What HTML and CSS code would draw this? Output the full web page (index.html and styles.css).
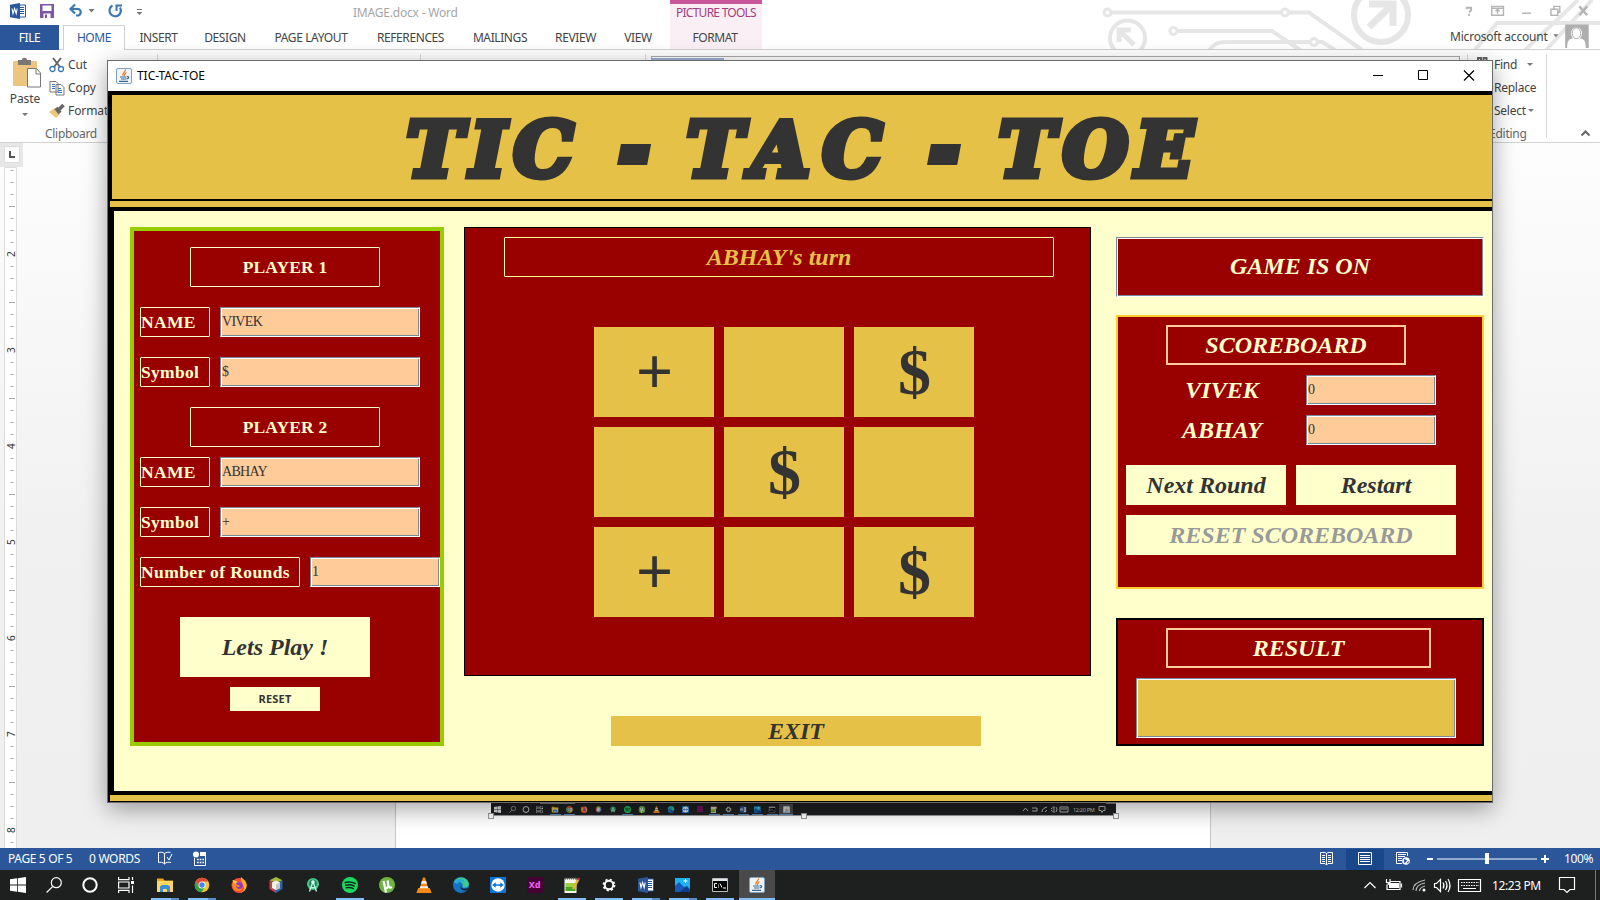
FILE: index.html
```html
<!DOCTYPE html>
<html lang="en">
<head>
<meta charset="utf-8">
<title>TIC-TAC-TOE</title>
<link rel="stylesheet" href="styles.css">
</head>
<body>
<svg width="0" height="0" class="defs">
  <symbol id="i-start" viewBox="0 0 16 16"><path fill="#fff" d="M0 2.3 7 1.3V7.6H0zM7.8 1.2 16 0V7.6H7.8zM0 8.4H7V14.7L0 13.7zM7.8 8.4H16V16L7.8 14.8z"/></symbol>
  <symbol id="i-search" viewBox="0 0 16 16"><g fill="none" stroke="#fff" stroke-width="1.2"><circle cx="10.3" cy="5.7" r="5"/><path d="M6.8 9.3.6 15.5"/></g></symbol>
  <symbol id="i-cortana" viewBox="0 0 16 16"><circle cx="8" cy="8" r="6.7" fill="none" stroke="#fff" stroke-width="2"/></symbol>
  <symbol id="i-task" viewBox="0 0 16 16"><g fill="none" stroke="#fff" stroke-width="1.2"><path d="M.6 0V2.600H11V0M.6 16V13.400H11V16M.6 5H11V11H.6zM14.500 0V3M14.500 8.500V16"/></g><path fill="#fff" d="M13 4h3v3h-3z"/></symbol>
  <symbol id="i-explorer" viewBox="0 0 16 16"><path fill="#e8a91c" d="M0 1.500h6l1.500 2H16V6H0z"/><path fill="#ffd767" d="M0 4h16v11H0z"/><path fill="#3d8fd6" d="M3 15V9.500L5 8h6l2 1.500V15h-3v-3H6v3z"/></symbol>
  <symbol id="i-chrome" viewBox="0 0 16 16"><circle cx="8" cy="8" r="7.300" fill="#f7c52d"/><path fill="#e0473a" d="M8 .7A7.300 7.300 0 0 0 1.700 4.300L4.800 9.500 8 4.500h6.400A7.300 7.300 0 0 0 8 .7z"/><path fill="#2da14c" d="M1.700 4.300A7.300 7.300 0 0 0 7.500 15.300L11 10 5 10.200z"/><circle cx="8" cy="8" r="3.500" fill="#fff"/><circle cx="8" cy="8" r="2.700" fill="#4284f0"/></symbol>
  <symbol id="i-firefox" viewBox="0 0 16 16"><circle cx="8" cy="8.500" r="7.500" fill="#ff4a3d"/><path fill="#ffb31f" d="M10 0c2 2 5.700 4 5.700 8.500S11.500 16 8 16c4-1 6-4 4.500-7C12 6 9 4 10 0z"/><path fill="#ffcb35" d="M1.500 3C3 3 4 4 5 4L9 6.500 5 7 3 9z"/><circle cx="8" cy="8.500" r="3.600" fill="#8c38c8"/><path fill="#ff8a21" d="M1 7c2-1 4-.5 6 1l2 1c-1 1.500-3 1-4 0 0 3 4 4 6 2-1 4-7 4-9 0z"/></symbol>
  <symbol id="i-cube" viewBox="0 0 16 16"><path fill="#a5ba3d" d="m8 0 6.500 3.200L8 6 1.500 3.200z"/><path fill="#b84451" d="M1.500 3.200 8 6v10l-6.500-4z"/><path fill="#2a66a5" d="M14.500 3.200 8 6v10l6.500-4z"/><path fill="#f4f0e5" d="m8 3.500 4 2V11l-4 2-4-2V5.500z"/><path fill="#c5c5c5" d="m8 7.500 4-2V11l-4 2z"/></symbol>
  <symbol id="i-android" viewBox="0 0 16 16"><circle cx="8" cy="7" r="6" fill="#40c987"/><circle cx="8" cy="6.500" r="3.800" fill="#1f7d62"/><path d="m4.500 14.500 3-8.500M11.500 14.500 8.500 6M5.500 10q2.500 1.500 5 0" stroke="#bff0da" stroke-width="1.400" fill="none"/><circle cx="8" cy="5" r="1.800" fill="#e5fff3"/></symbol>
  <symbol id="i-spotify" viewBox="0 0 16 16"><circle cx="8" cy="8" r="8" fill="#1ed760"/><path d="M3.200 5.500c3.500-1 7-.6 10 1M3.700 8.200c3-.8 6-.5 8.500.9M4.300 10.800c2.500-.6 5-.3 7 .8" stroke="#102a18" stroke-width="1.500" fill="none" stroke-linecap="round"/></symbol>
  <symbol id="i-ut" viewBox="0 0 16 16"><circle cx="8" cy="8" r="8" fill="#6fb544"/><path d="M4.500 4 6 10.500c1.500 1 3.500.5 3.300-2L8.700 3.500M9.300 8.500c.5 2.500 2 2.500 3.500 1.500M6 10.500 7 15.500" stroke="#fff" stroke-width="2.200" fill="none"/></symbol>
  <symbol id="i-vlc" viewBox="0 0 16 16"><path fill="#f48b15" d="M2.200 11h11.600l1.800 5H.4z"/><path fill="#f58a12" d="M7 .5h2L12.500 12c-1 1.500-8 1.500-9 0z"/><path fill="#eee" d="m5.900 4 4.200 0 .9 2.800H5zM4.300 9.300h7.400l.6 2H3.700z"/></symbol>
  <symbol id="i-edge" viewBox="0 0 16 16"><circle cx="8" cy="8" r="8" fill="#1673ca"/><path fill="#3ccb8b" d="M1 5C3 0 10-1 14 3c3 3 2 7-1 7.500H9.500c1-2 .5-5-3-5.500C4 4.500 2 5 1 6z"/><path fill="#26aadb" d="M1 5c3-4 9-4 11 0-3-1-6-.5-8 2z"/><path fill="#1c1c1c" d="M8 8c-1 3 3 5 7 3l-.6 1.500C11 15 6 12 8 8z"/></symbol>
  <symbol id="i-tv" viewBox="0 0 16 16"><path fill="#0d72d8" d="M0 0h16v16H0z"/><circle cx="8" cy="8" r="6.700" fill="#fff"/><path fill="#0d72d8" d="m2.200 8 3.500-2.800v2h4.600v-2L13.800 8l-3.500 2.800v-2H5.700v2z"/></symbol>
  <symbol id="i-npp" viewBox="0 0 16 16"><path fill="#f5f5e9" d="M.5 1.500h12V16H.5z"/><path fill="#9bd043" d="M1.500 6h10v5h-10z"/><path fill="#46a51f" d="M1.500 10h10v4h-10z"/><path d="M1 1.500h11" stroke="#555" stroke-width="2" stroke-dasharray="1 1"/><path d="m9 12 5.500-10" stroke="#e7b32d" stroke-width="2.500"/><path d="m14 3 1-2" stroke="#c52d2d" stroke-width="2.500"/></symbol>
  <symbol id="i-gear" viewBox="0 0 16 16"><circle cx="8" cy="8" r="4.200" fill="none" stroke="#fff" stroke-width="1.900"/><circle cx="8" cy="8" r="5.600" fill="none" stroke="#fff" stroke-width="1.600" stroke-dasharray="2.200 2.200"/></symbol>
  <symbol id="i-word" viewBox="0 0 16 16"><path fill="#fff" stroke="#2b579a" d="M8 2h7.500v12H8z"/><path d="M9.500 4.500H14M9.500 6.500H14M9.500 8.500H14M9.500 10.500H14" stroke="#2b579a"/><path fill="#2b579a" d="m0 1.800 10-1.800v16L0 14.200z"/><path d="m2 5.500 1 5 1.600-5 1.600 5 1-5" fill="none" stroke="#fff" stroke-width="1.100"/></symbol>
  <symbol id="i-photos" viewBox="0 0 16 16"><path fill="#1bb3f2" d="M0 1h15v14H0z"/><path fill="#175ab8" d="m0 9 4-4 6 6 2-2 3 3v3H0z"/><path fill="#0c3f8e" d="m5 15 6-6 4 4v2z"/><path d="M10.500 2v4M8.500 4h4" stroke="#fff"/></symbol>
  <symbol id="i-cmd" viewBox="0 0 16 16"><path fill="#000" stroke="#bbb" d="M.5 1.500h15v13H.5z"/><path fill="#dde5ee" d="M1 2h14v2H1z"/><path d="M5 6.500H2.500v4H5M6.500 7.500v1M6.500 9.500v1M8 6.500l2 4M11 11h3" fill="none" stroke="#fff"/></symbol>
  <symbol id="i-java" viewBox="0 0 16 16"><rect x=".5" y=".5" width="15" height="15" rx="1.500" fill="#f1f4f7" stroke="#7fa0b8"/><path d="M9.500 1.500C10 4 6 4.500 7 7.500M10.500 4.500C8 5.500 9.500 6.500 8 8" fill="none" stroke="#e8781f" stroke-width="1.300"/><path d="M4 9h6.500M5 11h5M3 13.300h9M11 8.700c2.500-.4 2 2-.5 2.300" fill="none" stroke="#38688f" stroke-width="1.200"/></symbol>
</svg>

<div class="word">
  <header class="word-top">
    <svg class="deco" viewBox="1100 0 500 49" width="500" height="49">
      <g fill="none" stroke="#e6e6e6" stroke-width="4">
        <path d="M1111 12.500H1281M1289 12.500H1309L1362 50M1177 31H1272L1300 50M1209 50C1215 43 1219 42 1226 42H1310M1318 42H1322L1335 50"/>
        <path d="M1475 50 1497 23H1600M1525 50 1578 0M1546 50 1592 0"/>
        <circle cx="1107.500" cy="12.500" r="3.500" stroke-width="3"/><circle cx="1285" cy="12.500" r="3.500" stroke-width="3"/><circle cx="1173.500" cy="31" r="3.500" stroke-width="3"/><circle cx="1314" cy="42" r="3.500" stroke-width="3"/>
        <circle cx="1127.500" cy="38" r="17.500"/><path d="M1119 42V30H1131M1120 31 1134 45" stroke-width="5"/>
        <circle cx="1381" cy="15" r="27" stroke-width="6"/><path d="M1369 4H1393V26M1392 5 1369 27" stroke-width="7"/>
      </g>
    </svg>
    <div class="qat">
      <svg width="160" height="25" viewBox="0 0 160 25">
        <use href="#i-word" x="10" y="3" width="16" height="16"/>
        <path fill="#8055a8" d="M40 4h14v14H40z"/><path fill="#fff" d="M42.500 5.500h9V11h-9zM43.500 13.500h7V18h-7z"/><path fill="#8055a8" d="M45 14.500h2V18h-2z"/>
        <path d="M71 9H78.500A3.500 3.500 0 0 1 78.500 15.500H76M75 4.500 70.500 9 75 13.500" fill="none" stroke="#3b76b5" stroke-width="2.200"/><path fill="#777" d="M88.500 9h6l-3 3.500z"/>
        <path d="M112.500 5.500A5.700 5.700 0 1 0 120 7.500" fill="none" stroke="#3b76b5" stroke-width="2.200"/><path d="M122 5.500H116.500V11" fill="none" stroke="#3b76b5" stroke-width="2"/>
        <path d="M137 9.500h5" stroke="#777"/><path fill="#777" d="M136.500 12h6l-3 3z"/>
      </svg>
    </div>
    <div class="doc-name">IMAGE.docx - Word</div>
    <div class="tools-head">PICTURE TOOLS</div>
    <nav class="tabs">
      <span class="t-file">FILE</span><span class="t-home">HOME</span><span class="t-ins">INSERT</span><span class="t-des">DESIGN</span><span class="t-lay">PAGE LAYOUT</span><span class="t-ref">REFERENCES</span><span class="t-mail">MAILINGS</span><span class="t-rev">REVIEW</span><span class="t-view">VIEW</span><span class="t-fmt">FORMAT</span>
      <span class="acct">Microsoft account</span>
    </nav>
    <svg class="win-ctl" width="150" height="50" viewBox="1450 0 150 50">
      <g fill="none" stroke="#b5b5b5" stroke-width="1.500"><path stroke-width="2" d="M1465.500 9.500V8H1470V10.500L1468 12.500M1468 14v2"/><path d="M1491 6.500h12v9h-12zM1491 8.500h12M1497 14v-4M1495 11.500l2-2 2 2M1522 13.500h9M1554.500 9V6.500h6v6h-2M1551.500 9.500h7v6h-7z"/><path stroke-width="2.500" d="m1580.500 6.500 8 9m0-9-8 9"/></g>
      <path fill="#777" d="M1554 35h5l-2.500 3z"/>
      <path fill="#aeaeae" d="M1566 25h24v24h-24z"/><path fill="#fff" d="M1568 49c0-8 2-9 6-10-3-3-3-11 3.500-11s7 8 3.500 11c4 1 6 2 6 10z"/><ellipse cx="1577.500" cy="34" rx="4.300" ry="5.500" fill="#fff" stroke="#aeaeae"/>
    </svg>
  </header>

  <section class="ribbon">
    <div class="paste">
      <svg width="30" height="32" viewBox="0 0 30 32"><rect x="1" y="4" width="24" height="25" rx="1" fill="#ecc67f"/><path fill="#777" d="M6 3h4c0-3 5-3 5 0h4v5H6z"/><path fill="#fff" stroke="#777" d="M15.500 11.500h9l4 4.500v14h-13z"/><path d="M24 12v5h5" fill="none" stroke="#777"/></svg>
      <span>Paste</span><i class="caret"></i>
    </div>
    <div class="clip">
      <div><svg width="16" height="16"><path d="M4 1 11 10M12 1 5 10" stroke="#666" stroke-width="2"/><circle cx="3.500" cy="12" r="2.500" fill="none" stroke="#3b76b5" stroke-width="1.300"/><circle cx="12" cy="12" r="2.500" fill="none" stroke="#3b76b5" stroke-width="1.300"/></svg>Cut</div>
      <div><svg width="16" height="16"><path fill="#fff" stroke="#777" d="M1 1.500h6l2 2V12H1zM7 4.500h5l3 3V15H7z"/><path d="M3 4.500h3M3 6.500h3M3 8.500h3M9 8.500h3M9 10.500h4M9 12.500h4" stroke="#3b76b5"/></svg>Copy</div>
      <div><svg width="16" height="16"><path fill="#ecc67f" d="m0 9 6-4 5 6-4 4z"/><path stroke="#666" stroke-width="4" d="m7 5 4 5"/><path stroke="#666" stroke-width="3.500" d="m9.500 7 5-5"/></svg>Format</div>
    </div>
    <div class="group-name g1">Clipboard</div>
    <i class="sep s1"></i><i class="sep s2"></i><i class="sep s3"></i><i class="sep s4"></i><i class="sep s5"></i>
    <div class="gallery"><i></i></div>
    <svg class="binoc" width="12" height="8"><path d="M2 7V3h3v4M7.500 7V3h3v4" fill="none" stroke="#666" stroke-width="2"/></svg>
    <div class="edit"><div>Find<i class="caret far"></i></div><div>Replace</div><div>Select<i class="caret"></i></div></div>
    <div class="group-name g2">Editing</div>
    <svg class="collapse" width="12" height="8"><path d="m1.500 6.500 4-4 4 4" fill="none" stroke="#666" stroke-width="2"/></svg>
  </section>

  <main class="doc">
    <svg class="ruler" width="23" height="705" viewBox="0 143 23 705">
      <path fill="#e7e7e7" d="M0 143h23v24H0z"/>
      <path fill="#fff" stroke="#ddd" d="M4.500 146.500h15v16h-15zM4.500 167.500h12V860h-12z"/>
      <path d="M10 151v6h5" fill="none" stroke="#555" stroke-width="2"/>
      <path d="M12 170V848" stroke="#aaa" stroke-width="3" stroke-dasharray="1 11"/>
      <path d="M12 206V848" stroke="#aaa" stroke-width="6" stroke-dasharray="1 95"/>
      <path fill="#fff" d="M6 248h10v12H6zM6 344h10v12H6zM6 440h10v12H6zM6 536h10v12H6zM6 632h10v12H6zM6 728h10v12H6zM6 824h10v12H6z"/>
      <g class="rnum">
        <text transform="translate(15 257) rotate(-90)">2</text><text transform="translate(15 353) rotate(-90)">3</text><text transform="translate(15 449) rotate(-90)">4</text><text transform="translate(15 545) rotate(-90)">5</text><text transform="translate(15 641) rotate(-90)">6</text><text transform="translate(15 737) rotate(-90)">7</text><text transform="translate(15 833) rotate(-90)">8</text>
      </g>
    </svg>
    <div class="page">
      <svg width="640" height="30" viewBox="484 796 640 30">
        <path fill="#1d1f20" d="M491 796h625v19H491z"/><path d="M491 815.500h625" stroke="#999"/><path d="M540 803.500h35M1106 803.500h10" stroke="#777"/>
        <path fill="#484848" d="M779 804h14v11h-14z"/>
        <g opacity=".85">
        <use href="#i-start" x="494" y="806" width="7" height="7"/><use href="#i-search" x="509" y="806" width="7" height="7"/><use href="#i-cortana" x="522" y="806" width="8" height="7"/><use href="#i-task" x="536" y="806" width="7" height="7"/>
        <use href="#i-explorer" x="551.500" y="806" width="7" height="7"/><use href="#i-chrome" x="566" y="806" width="7" height="7"/><use href="#i-firefox" x="580.500" y="806" width="7" height="7"/><use href="#i-cube" x="595" y="806" width="7" height="7"/><use href="#i-android" x="609.500" y="806" width="7" height="7"/><use href="#i-spotify" x="624" y="806" width="7" height="7"/><use href="#i-ut" x="638.500" y="806" width="7" height="7"/><use href="#i-vlc" x="653" y="806" width="7" height="7"/><use href="#i-edge" x="667.500" y="806" width="7" height="7"/><use href="#i-tv" x="682" y="806" width="7" height="7"/><path fill="#7d1263" d="M697 806h6v6h-6z"/><use href="#i-npp" x="710.500" y="806" width="7" height="7"/><use href="#i-gear" x="725" y="806" width="7" height="7"/><use href="#i-word" x="739.500" y="806" width="7" height="7"/><use href="#i-photos" x="754" y="806" width="7" height="7"/><use href="#i-cmd" x="768.500" y="806" width="7" height="7"/><use href="#i-java" x="783" y="806" width="7" height="7"/>
        <path d="M550 814.500h11M564 814.500h11M622 814.500h11M709 814.500h11M723 814.500h11M738 814.500h11M752 814.500h11M767 814.500h11M779 814.500h14" stroke="#5f9ad0"/>
        <path d="m1023 811 2.500-3 2.500 3M1032 808h5v3h-5M1042 812c0-3 2-4 5-5M1045 812l2-2M1051 808.500h1l2-2v6l-2-2h-1M1056 807q2 2 0 5M1060 807h8v5h-8zM1061 809h6M1099 806.500h6v4h-2l-1 2-1-2h-2z" fill="none" stroke="#ccc"/>
        <text x="1073" y="811.500" class="mini-clock">12:20 PM</text></g>
        <g fill="#fff" stroke="#999"><rect x="488.500" y="813.500" width="5" height="5"/><rect x="801.500" y="813.500" width="5" height="5"/><rect x="1113.500" y="813.500" width="5" height="5"/></g>
      </svg>
    </div>
  </main>

  <footer class="status">
    <span class="st-page">PAGE 5 OF 5</span><span class="st-words">0 WORDS</span>
    <svg class="st-proof" width="52" height="22" viewBox="156 0 52 22"><g fill="none" stroke="#fff"><path d="M164.500 16V5.500C163 4 160 4 158.500 4.500V14.500C160 14 163 14 164.500 16C166 14 169 14 171 14.500M164.500 5.500C166 4 169 4 170.500 4.500M167 9l2 3 3-6"/></g><circle cx="196" cy="6.500" r="3" fill="#fff"/><path fill="#fff" d="M200 4h6v4h-6z"/><path d="M194.500 10v7.500h11V8" fill="none" stroke="#fff"/><path d="M197 11.500h7M197 14.500h7" stroke="#fff" stroke-width="1.500" stroke-dasharray="1.700 1"/></svg>
    <svg class="st-view" width="240" height="22" viewBox="1318 0 240 22">
      <path fill="#1a478a" d="M1346 1h38v21h-38z"/>
      <g fill="none" stroke="#fff"><path d="M1320.500 4.500h4.500l1.500 1 1.500-1h4.500v11h-4.500l-1.500 1.500-1.500-1.500h-4.500zM1326.500 5v12M1322 7.500h3M1322 9.500h3M1322 11.500h3M1322 13.500h3M1328 7.500h3M1328 9.500h3M1328 11.500h3M1328 13.500h3"/><path d="M1358.500 4.500h13v12h-13zM1360 7.500h10M1360 9.500h10M1360 11.500h10M1360 13.500h10"/><path d="M1402 15.500h-5.500v-11h11V8M1398 6.500h8M1398 8.500h7M1398 10.500h4M1398 12.500h4"/></g>
      <circle cx="1406" cy="13" r="3.800" fill="#fff"/><path fill="#2b579a" d="m1404 11 3 1-1 2-2 1zM1407 14l2-1-1 3z"/>
      <path fill="#fff" d="M1427 10h6v2h-6zM1437 10.500h100v1h-100zM1485 5h4v11h-4zM1541 10h8v2h-8zM1544 7h2v8h-2z"/>
    </svg>
    <span class="st-zoom">100%</span>
  </footer>

  <footer class="taskbar">
    <span class="sys"><svg><use href="#i-start"/></svg></span><span class="sys"><svg><use href="#i-search"/></svg></span><span class="sys"><svg><use href="#i-cortana"/></svg></span><span class="sys last"><svg><use href="#i-task"/></svg></span>
    <span class="app run multi"><svg><use href="#i-explorer"/></svg></span><span class="app run multi"><svg><use href="#i-chrome"/></svg></span><span class="app"><svg><use href="#i-firefox"/></svg></span><span class="app"><svg><use href="#i-cube"/></svg></span><span class="app"><svg><use href="#i-android"/></svg></span><span class="app run"><svg><use href="#i-spotify"/></svg></span><span class="app"><svg><use href="#i-ut"/></svg></span><span class="app"><svg><use href="#i-vlc"/></svg></span><span class="app"><svg><use href="#i-edge"/></svg></span><span class="app"><svg><use href="#i-tv"/></svg></span><span class="app"><b class="xd">Xd</b></span><span class="app run"><svg><use href="#i-npp"/></svg></span><span class="app run"><svg><use href="#i-gear"/></svg></span><span class="app run multi"><svg><use href="#i-word"/></svg></span><span class="app run multi"><svg><use href="#i-photos"/></svg></span><span class="app run"><svg><use href="#i-cmd"/></svg></span><span class="app active"><svg><use href="#i-java"/></svg></span>
    <svg class="tray" width="124" height="30" viewBox="1362 0 124 30"><g fill="none" stroke="#fff" stroke-width="1.200"><path d="m1364.500 18 5.500-5.500 5.500 5.500"/><path d="M1390 11.500h10v8h-13v-5M1386.500 9v3.500h3.500V9M1388.300 13v2M1401.500 13.500v4"/><path d="M1413 20c0-5 3-8 12-10M1416 21c0-4 3-7 9-8M1419.500 21c0-3 2-4 5.500-5" stroke="#bbb"/><path d="M1434.500 13.500h2l4-4v12l-4-4h-2zM1443 12.500q2 3 0 6M1445.500 11q3 4.500 0 9M1448 9q4 6.500 0 13"/><path d="M1458.500 9.500h22v12h-22zM1463 18.500h13"/><path d="M1461 12.500h18M1461 15.500h18" stroke-dasharray="1.500 1"/></g><path fill="#fff" d="M1389 13h10v5h-10z"/><circle cx="1424" cy="20" r="1.500" fill="#fff"/></svg>
    <span class="clock">12:23 PM</span>
    <svg class="notif" width="18" height="18"><path d="M1.500 1.500h15v12h-4.500l-3 3-3-3h-4.500z" fill="none" stroke="#fff" stroke-width="1.200"/></svg>
    <i class="peek"></i>
  </footer>
</div>

<div class="window">
  <div class="titlebar">
    <svg width="16" height="16"><use href="#i-java"/></svg><span>TIC-TAC-TOE</span>
    <svg class="wbtn" width="104" height="14" viewBox="1372 74 104 14"><g fill="none" stroke="#000"><path d="M1373 81.500h10M1418.500 76.500h9v9h-9z"/><path d="m1464 76.500 10 10m0-10-10 10" stroke-width="1.200"/></g></svg>
  </div>
  <div class="banner"><span class="w1">TIC</span><span class="dash d1">-</span><span class="w3">TAC</span><span class="dash d2">-</span><span class="w5">TOE</span></div>
  <div class="stripe"></div>
  <div class="board">
    <section class="players">
      <h2>PLAYER 1</h2>
      <div class="row"><label>NAME</label><div class="field">VIVEK</div></div>
      <div class="row"><label>Symbol</label><div class="field">$</div></div>
      <h2 class="second">PLAYER 2</h2>
      <div class="row close"><label>NAME</label><div class="field">ABHAY</div></div>
      <div class="row"><label>Symbol</label><div class="field">+</div></div>
      <div class="row rounds"><label>Number of Rounds</label><div class="field">1</div></div>
      <button class="play">Lets Play !</button>
      <button class="reset">RESET</button>
    </section>
    <section class="middle">
      <div class="arena">
        <div class="turn">ABHAY's turn</div>
        <div class="cells"><b>+</b><b></b><b>$</b><b></b><b>$</b><b></b><b>+</b><b></b><b>$</b></div>
      </div>
      <button class="exit">EXIT</button>
    </section>
    <section class="side">
      <div class="game-on">GAME IS ON</div>
      <div class="scores">
        <h3>SCOREBOARD</h3>
        <div class="score"><span>VIVEK</span><div class="field">0</div></div>
        <div class="score"><span>ABHAY</span><div class="field">0</div></div>
        <div class="btns"><button>Next Round</button><button>Restart</button><button class="wide" disabled>RESET SCOREBOARD</button></div>
      </div>
      <div class="result"><h3>RESULT</h3><div class="out"></div></div>
    </section>
  </div>
  <div class="stripe bottom"></div>
</div>
</body>
</html>
```
FILE: styles.css
```css
* { box-sizing: border-box; }
body { margin: 0; width: 1600px; height: 900px; overflow: hidden; position: relative; background: #fff; font-family: "Noto Sans", "Open Sans", sans-serif; font-size: 12px; color: #444; }
svg { display: block; flex: none; }
.defs { position: absolute; }
h2, h3 { margin: 0; }
button { border: 0; padding: 0; margin: 0; border-radius: 0; }

/* Word */
.word { width: 1600px; height: 900px; display: flex; flex-direction: column; }
.word-top { height: 50px; flex: none; position: relative; border-bottom: 1px solid #d0d0d0; display: grid; grid-template: 25px 25px / 160px 1fr; }
.deco { position: absolute; left: 1100px; top: 0; }
.win-ctl { position: absolute; left: 1450px; top: 0; height: 49px; width: 150px; }
.doc-name { position: absolute; left: 353px; top: 4px; line-height: 17px; color: #a6a6a6; letter-spacing: -.2px; white-space: nowrap; }
.tools-head { position: absolute; left: 670px; top: 0; width: 92px; height: 49px; border-top: 4px solid #c9589b; background: #fbeff6; color: #a53c7c; text-align: center; line-height: 18px; letter-spacing: -.75px; white-space: nowrap; }
.tabs { grid-area: 2 / 1 / 3 / 3; display: flex; position: relative; height: 25px; line-height: 25px; text-align: center; letter-spacing: -.4px; white-space: nowrap; }
.tabs span { flex: none; }
.t-file { width: 59px; margin-right: 4px; background: #2b579a; color: #fff; }
.t-home { width: 62px; background: #fff; border: 1px solid #d0d0d0; border-bottom: 0; color: #2b579a; line-height: 23px; }
.t-ins { width: 67px; }
.t-des { width: 66px; }
.t-lay { width: 106px; }
.t-ref { width: 93px; }
.t-mail { width: 86px; }
.t-rev { width: 65px; }
.t-view { width: 60px; }
.t-fmt { width: 94px; }
.acct { margin-left: 688px; letter-spacing: -.2px; line-height: 23px; }
.ribbon { height: 93px; flex: none; position: relative; border-bottom: 1px solid #d2d2d2; display: flex; letter-spacing: -.1px; }
.paste { width: 49px; padding-top: 7px; display: flex; flex-direction: column; align-items: center; }
.paste svg { margin-left: 5px; }
.paste span { line-height: 20px; padding-left: 1px; }
.caret { display: inline-block; border: 3px solid transparent; border-top-color: #777; border-bottom: 0; vertical-align: middle; }
.paste .caret { margin-top: 4px; }
.clip { padding-top: 3px; display: flex; flex-direction: column; }
.clip div { display: flex; gap: 3px; align-items: center; height: 23px; }
.group-name { position: absolute; top: 76px; line-height: 16px; color: #666; }
.g1 { left: 45px; letter-spacing: -.3px; }
.g2 { left: 1489px; letter-spacing: -.25px; }
.sep { position: absolute; top: 4px; width: 1px; height: 84px; background: #d8d8d8; }
.s1 { left: 157px; }
.s2 { left: 420px; }
.s3 { left: 645px; }
.s4 { left: 1467px; }
.s5 { left: 1546px; }
.gallery { position: absolute; left: 651px; top: 6px; width: 809px; height: 70px; border: 1px solid #aaa; padding-top: 1px; }
.gallery i { display: block; width: 72px; height: 6px; background: #9cb0d6; }
.binoc { position: absolute; left: 1476px; top: 5px; }
.edit { position: absolute; left: 1494px; top: 3px; letter-spacing: -.25px; }
.edit div { height: 23px; line-height: 23px; white-space: nowrap; }
.edit .caret { margin: 0 0 2px 2px; }
.edit .far { margin-left: 10px; }
.collapse { position: absolute; left: 1580px; top: 79px; }
.doc { flex: 1; display: flex; background: linear-gradient(#fdfdfd, #f0f0f0 60%, #efefef); overflow: hidden; }
.rnum { font: 10px "Noto Sans", sans-serif; fill: #333; }
.page { margin-left: 372px; width: 816px; background: #fff; border: solid #c6c6c6; border-width: 0 1px; padding: 653px 0 0 88px; overflow: hidden; }
.mini-clock { font: 5.5px "Noto Sans", sans-serif; fill: #ddd; letter-spacing: -.3px; }
.status { height: 22px; flex: none; background: #2b579a; color: #fff; display: flex; line-height: 21px; letter-spacing: -.35px; white-space: nowrap; }
.status span { flex: none; }
.st-page { width: 81px; margin-left: 8px; }
.st-words { width: 67px; letter-spacing: -.3px; }
.st-view { margin-left: 1110px; }
.st-zoom { width: 36px; margin-left: 6px; }
.taskbar { height: 30px; flex: none; background: #1e1f1f; display: flex; align-items: center; }
.sys { width: 36px; display: flex; justify-content: center; }
.sys.last { margin-right: 2px; }
.taskbar span svg { width: 16px; height: 16px; }
.app { width: 37px; height: 30px; display: flex; justify-content: center; align-items: center; position: relative; flex: none; }
.xd { width: 16px; height: 16px; border-radius: 2px; background: #470137; color: #ff61f6; font-size: 9px; line-height: 15px; text-align: center; }
.run::after { content: ""; position: absolute; left: 5px; bottom: 0; width: 28px; height: 2px; background: #84bdf5; }
.multi::after { background: linear-gradient(90deg, #84bdf5 20px, #5b8fc2 20px); }
.active { background: #4a4a4a; width: 36px; margin-left: 1px; border-bottom: 2px solid #84bdf5; padding-top: 2px; }
.tray { margin-left: 587px; }
.clock { width: 66px; padding-left: 6px; color: #fff; white-space: nowrap; letter-spacing: -.4px; }
.notif { margin-left: 6px; }
.peek { margin-left: 19px; width: 1px; height: 30px; background: #777; }

/* Game window */
.window { position: absolute; left: 107px; top: 60px; width: 1386px; height: 743px; border: 1px solid #6b6b6b; background: #000; box-shadow: 0 6px 22px rgba(0,0,0,.36); font-family: "Liberation Serif", serif; color: #333; }
.titlebar { height: 30px; background: #fff; display: flex; align-items: center; padding-left: 8px; color: #000; font: 12px "Noto Sans", sans-serif; letter-spacing: -.05px; gap: 5px; }
.titlebar span { width: 120px; padding-bottom: 2px; }
.wbtn { margin-left: 1110px; margin-bottom: 2px; }
.banner { height: 108px; border: solid #000; border-width: 4px 0 0 4px; background: #e5c147; display: flex; font: italic bold 75px/111px "DejaVu Serif", serif; color: #333; -webkit-text-stroke: 7px #333; paint-order: stroke fill; padding-left: 289px; }
.banner span { flex: none; text-align: center; height: 104px; white-space: nowrap; }
.w1 { width: 186px; letter-spacing: 8px; }
.d1 { width: 94px; }
.w3 { width: 220px; letter-spacing: 13px; }
.d2 { width: 86px; }
.w5 { width: 226px; letter-spacing: 8px; }
.banner .dash { -webkit-text-stroke-width: 14px; font-size: 52px; }
.stripe { height: 8px; border: solid #000; border-width: 2px 0 0 2px; background: #e5c147; }
.board { height: 588px; border: solid #000; border-width: 4px 0 4px 6px; background: #ffffcc; padding: 16px 8px 0 16px; display: grid; grid-template-columns: 314px 627px 368px; column-gap: 20px; align-items: start; }
.side { margin-left: 5px; width: 368px; }
.bottom { border-top: 0; border-bottom: 1px solid #000; height: 7px; }
.players { height: 519px; border: 4px solid #99cc00; background: #990000; padding: 16px 0 0 6px; color: #ffffcc; }
h2 { width: 190px; height: 40px; margin-left: 50px; border: 1px solid #ffffcc; border-radius: 1px; font-size: 17.5px; letter-spacing: .15px; line-height: 39px; text-align: center; }
.row { display: flex; gap: 10px; margin-top: 20px; }
.close { margin-top: 10px; }
.second { margin-top: 20px; }
.row label { width: 70px; height: 30px; border: 1px solid #ffffcc; border-radius: 1px; font-weight: bold; font-size: 17.5px; letter-spacing: .3px; line-height: 29px; white-space: nowrap; flex: none; }
.field { width: 200px; height: 30px; background: #ffcc99; color: #333; border: 1px solid; border-color: #7a8a99 #fff #fff #7a8a99; box-shadow: inset 1px 1px #fff, inset -1px -1px #7a8a99; font-size: 14px; line-height: 28px; padding-left: 1px; letter-spacing: -.7px; flex: none; }
.rounds label { width: 160px; letter-spacing: .4px; }
.rounds .field { width: 130px; }
.play { display: block; margin: 30px 0 0 40px; width: 190px; height: 60px; }
.reset { display: block; margin: 10px 0 0 90px; width: 90px; height: 24px; padding-bottom: 2px; font: bold 11px "Noto Sans", sans-serif; letter-spacing: .2px; background: #ffffcc; color: #333; }
.play, .exit, .btns button, .turn, .game-on, h3, .score span { font: italic bold 24px "Liberation Serif", serif; }
.play, .btns button { background: #ffffcc; color: #333; white-space: nowrap; }
.arena { height: 449px; border: 1px solid #000; background: #990000; padding: 9px 0 0 39px; }
.turn { width: 550px; height: 40px; border: 1px solid #ffff99; border-radius: 1px; color: #e5c147; text-align: center; }
.middle .turn { line-height: 38px; }
.cells { margin: 50px 0 0 90px; display: grid; grid-template: repeat(3, 90px) / repeat(3, 120px); gap: 10px; }
.cells b { background: #e5c147; font-size: 66px; line-height: 90px; padding-left: 1px; text-align: center; }
.exit { display: block; margin: 40px 0 0 147px; width: 370px; height: 30px; background: #e5c147; color: #333; }
.game-on { height: 60px; background: #990000; color: #ffffcc; text-align: center; margin-top: 10px; border: 1px solid; border-color: #7a8a99 #fff #fff #7a8a99; box-shadow: inset 1px 1px #fff, inset -1px -1px #7a8a99; }
.side .game-on { line-height: 56px; }
.scores { margin-top: 18px; height: 274px; border: 2px solid #ffcc33; background: #990000; padding: 8px 0 0 8px; color: #ffffcc; }
h3 { width: 240px; height: 40px; margin-left: 40px; border: 2px solid #ffcc99; color: #ffffcc; text-align: center; }
.side h3 { line-height: 36px; }
.score { display: flex; margin-top: 10px; }
.score span { width: 180px; padding-left: 12px; text-align: center; }
.scores .score span { line-height: 30px; }
.score .field { width: 130px; }
.btns { margin-top: 20px; display: grid; grid-template: 40px 40px / 160px 160px; gap: 10px; }
.btns .wide { grid-column: 1 / 3; color: #999; }
.result { margin-top: 29px; height: 128px; border: 2px solid #000; background: #990000; padding: 8px 0 0 8px; }
.result h3 { width: 265px; }
.out { margin: 10px 0 0 10px; width: 320px; height: 60px; background: #e5c147; border: 1px solid; border-color: #7a8a99 #fff #fff #7a8a99; box-shadow: inset 1px 1px #fff, inset -1px -1px #7a8a99; }
```
